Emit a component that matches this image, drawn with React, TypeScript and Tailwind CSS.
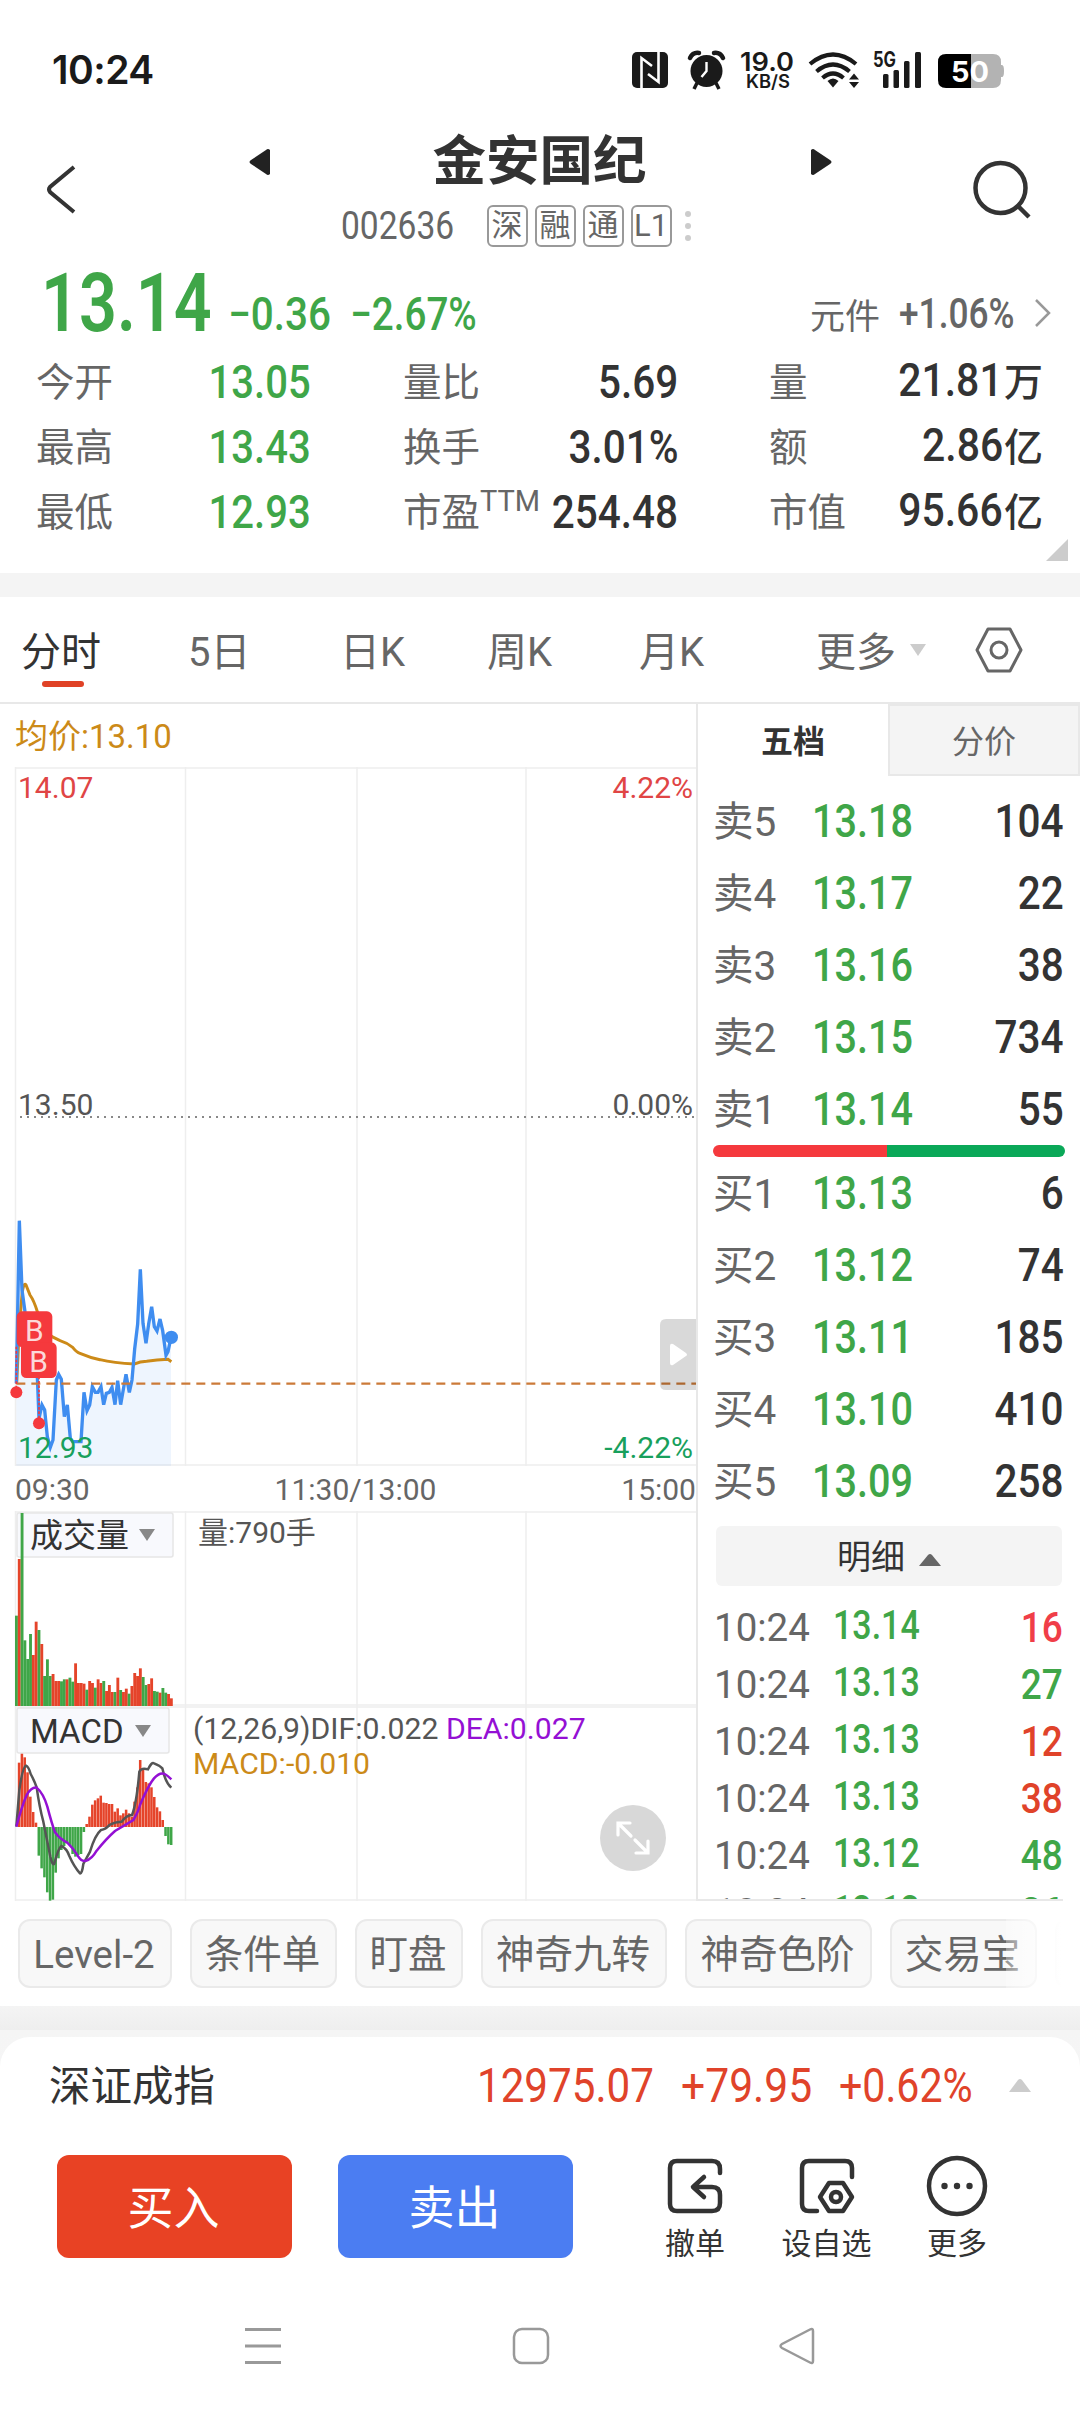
import React from 'react';

const stats = [
  ['今开', '13.05', '量比', '5.69', '量', '21.81', '万'],
  ['最高', '13.43', '换手', '3.01%', '额', '2.86', '亿'],
  ['最低', '12.93', '市盈', '254.48', '市值', '95.66', '亿'],
];

const sells = [
  ['卖5', '13.18', '104'],
  ['卖4', '13.17', '22'],
  ['卖3', '13.16', '38'],
  ['卖2', '13.15', '734'],
  ['卖1', '13.14', '55'],
];

const buys = [
  ['买1', '13.13', '6'],
  ['买2', '13.12', '74'],
  ['买3', '13.11', '185'],
  ['买4', '13.10', '410'],
  ['买5', '13.09', '258'],
];

const trades = [
  { time: '10:24', price: '13.14', qty: '16', color: 'text-[#f03e48]' },
  { time: '10:24', price: '13.13', qty: '27', color: 'text-[#3fa648]' },
  { time: '10:24', price: '13.13', qty: '12', color: 'text-[#e0432a]' },
  { time: '10:24', price: '13.13', qty: '38', color: 'text-[#e0432a]' },
  { time: '10:24', price: '13.12', qty: '48', color: 'text-[#3fa648]' },
  { time: '10:24', price: '13.13', qty: '26', color: 'text-[#3fa648]' },
];

const chips = [
  { label: 'Level-2', width: 'w-[154px]' },
  { label: '条件单', width: 'w-[147px]' },
  { label: '盯盘', width: 'w-[108px]' },
  { label: '神奇九转', width: 'w-[186px]' },
  { label: '神奇色阶', width: 'w-[187px]' },
  { label: '交易宝', width: 'w-[147px]' },
  { label: '', width: 'w-[147px]' },
];

const volumeTops = [
  347, 177, 39, 421, 477, 402, 465, 365, 390, 432, 528, 478, 528, 522, 543, 543, 544, 538, 538,
  533, 545, 490, 549, 549, 551, 569, 543, 549, 563, 538, 549, 543, 573, 555, 576, 576, 533, 570,
  576, 566, 581, 558, 519, 528, 505, 531, 555, 552, 535, 573, 575, 578, 564, 578, 582, 595,
];
const volumeColors = 'GRGGGGRRGRGGGRRRGGRGGRRRRGRRGRRGRRRGRGRRGRRRRGGRRGGRGGRR';

const macdBars = [
  981, 788, 753, 772, 817, 890, 936, 968, 1067, 1105, 1132, 1177, 1202, 1199, 1118, 1075, 1050,
  1038, 1030, 1035, 1062, 1070, 1065, 1062, 996, 972, 950, 914, 901, 895, 887, 908, 909, 912, 912,
  935, 925, 946, 940, 929, 940, 950, 905, 862, 780, 808, 846, 850, 862, 891, 922, 934, 960, 1008,
  1033, 1035,
];

const PRICE_LINE =
  '49,610 58,122 66,330 75,395 88,470 100,560 112,590 117,715 126,675 134,690 142,770 151,802 159,780 169,600 176,583 184,598 193,710 202,675 211,775 218,785 243,785 252,637 261,692 269,675 277,620 286,637 294,637 303,620 311,674 319,640 328,637 336,622 345,674 353,602 362,674 378,583 388,637 396,600 404,507 413,432 421,268 429,430 438,490 446,432 455,380 463,440 471,453 480,417 488,452 498,526 504,515 513,472';

interface NumProps {
  className?: string;
  children: React.ReactNode;
}

// condensed figures, used for every price
const Num: React.FC<NumProps> = ({ className = 'origin-right scale-x-[0.86]', children }) => (
  <span className={`inline-block whitespace-nowrap font-medium ${className}`}>{children}</span>
);

const StatusBar = () => (
  <div className="flex h-[105px] items-start pl-[52px] pt-[50px] text-[#1a1a1a]">
    <span className="w-[580px] font-['Inter'] text-[39px] font-semibold leading-[39px] tracking-[-0.5px]">
      10:24
    </span>
    <svg className="overflow-visible" width="380" height="42" viewBox="632 50 380 42" fill="#1a1a1a">
      <rect x="632" y="52" width="36" height="36" rx="5" />
      <path d="M641.500 88V58L652 66M658.500 52V82L648 74" stroke="#fff" strokeWidth="2.600" fill="none" />
      <circle cx="706.500" cy="71" r="16" />
      <path
        d="M690 58q3-6 9-5M723 58q-3-6-9-5"
        stroke="#1a1a1a"
        strokeWidth="4.500"
        fill="none"
        strokeLinecap="round"
      />
      <path d="M697 83l-3 6M716 83l3 6" stroke="#1a1a1a" strokeWidth="3.500" />
      <path d="M706.500 62v9l-5 6" stroke="#fff" strokeWidth="2.400" fill="none" />
      <text x="740" y="71" fontFamily="Inter" fontSize="26" fontWeight="600" textLength="54" lengthAdjust="spacingAndGlyphs">
        19.0
      </text>
      <text x="746" y="87.500" fontFamily="Inter" fontSize="18" fontWeight="600" textLength="44" lengthAdjust="spacingAndGlyphs">
        KB/S
      </text>
      <g fill="none" stroke="#1a1a1a" strokeWidth="4.200">
        <path d="M810 64q23-19 46 0" />
        <path d="M816.500 71.500q16.500-14 33 0" />
        <path d="M822.500 78q10.500-9 21 0" />
      </g>
      <path d="M827.500 81q5.500-5 11 0l-5.500 6.500z" />
      <path d="M849 79.500h10l-5-6zM849 82h10l-5 6z" />
      <text x="873" y="66.500" fontFamily="Inter" fontSize="21" fontWeight="700" textLength="23" lengthAdjust="spacingAndGlyphs">
        5G
      </text>
      <rect x="883" y="74" width="5.500" height="14" rx="1.500" />
      <rect x="893.500" y="70" width="5.500" height="18" rx="1.500" />
      <rect x="904" y="61" width="5.500" height="27" rx="1.500" />
      <rect x="915" y="52" width="6" height="36" rx="1.500" />
      <path d="M971 54h22q8 0 8 8v3h1q2 0 2 6t-2 6h-1v3q0 8-8 8h-22z" fill="#b3b3b3" />
      <path d="M971 54h-25q-8 0-8 8v18q0 8 8 8h25z" fill="#000" />
      <text x="951" y="82" fontFamily="Inter" fontSize="29" fontWeight="700" fill="#fff" textLength="38" lengthAdjust="spacingAndGlyphs">
        50
      </text>
    </svg>
  </div>
);

const Header = () => (
  <header className="flex h-[150px] items-start pl-[44px]">
    <button className="mt-[58px] mr-[165px]">
      <svg width="40" height="54" viewBox="44 163 40 54" fill="none">
        <path d="M74 167L50 187q-2 2.500 0 5L74 212" stroke="#333" strokeWidth="4" />
      </svg>
    </button>
    <svg className="mt-[43px]" width="22" height="28" viewBox="0 0 22 28">
      <path d="M21 2v24q-2 2-4 0L2 16q-3-2 0-4L17 2q2-2 4 0z" fill="#222" />
    </svg>
    <div className="flex w-[539px] flex-col items-center pt-[24px]">
      <h1 className="mr-[2px] text-[53.500px] font-bold leading-[66px] text-[#333]">金安国纪</h1>
      <div className="flex h-[42px] w-[350px] mt-[10px] ml-[-50px] items-center text-[#666]">
        <span className="w-[146px]">
          <span className="inline-block origin-left scale-x-[0.86] text-[39px]">002636</span>
        </span>
        <div className="flex gap-[7px] text-[31px] leading-[36px]">
          {['深', '融', '通', 'L1'].map((tag) => (
            <span key={tag} className="flex h-[42px] w-[41px] items-center justify-center rounded-md border-2 border-[#999]">
              {tag}
            </span>
          ))}
        </div>
        <div className="ml-[13px] flex flex-col gap-[6px]">
          <i className="h-[6px] w-[6px] rounded-full bg-[#ccc]" />
          <i className="h-[6px] w-[6px] rounded-full bg-[#ccc]" />
          <i className="h-[6px] w-[6px] rounded-full bg-[#ccc]" />
        </div>
      </div>
    </div>
    <svg className="mt-[43px]" width="22" height="28" viewBox="0 0 22 28">
      <path d="M1 2v24q2 2 4 0L20 16q3-2 0-4L5 2q-2-2-4 0z" fill="#222" />
    </svg>
    <svg className="mt-[52px] ml-[138px]" width="66" height="66" viewBox="970 157 66 66" fill="none" stroke="#333" strokeWidth="4.500">
      <circle cx="1000.500" cy="188" r="25" />
      <path d="M1018 206l11 11" />
    </svg>
  </header>
);

const Quote = () => (
  <section className="h-[318px] pl-[36px]">
    <div className="flex h-[93px] items-end pb-[7px] text-[#3fa648]">
      <span className="w-[192px] pl-[5px]">
        <Num className="origin-left scale-x-[0.82] text-[81px] font-semibold leading-[75px]">13.14</Num>
      </span>
      <span className="w-[122px]">
        <Num className="origin-left scale-x-[0.88] text-[46px] leading-[54px]">−0.36</Num>
      </span>
      <span className="w-[424px]">
        <Num className="origin-left scale-x-[0.84] text-[46px] leading-[54px]">−2.67%</Num>
      </span>
      <span className="w-[125px] pl-[36px] text-[35px] leading-[46px] text-[#666]">元件</span>
      <span className="w-[136px] text-[#666]">
        <Num className="origin-left scale-x-[0.84] text-[42px] leading-[54px]">+1.06%</Num>
      </span>
      <svg className="mb-[12px]" width="20" height="32" viewBox="0 0 20 32" fill="none">
        <path d="M1 3l13 13L1 29" stroke="#999" strokeWidth="2.500" />
      </svg>
    </div>
    {stats.map((row, i) => (
      <div key={row[0]} className="flex h-[65px] items-center pt-[3px] text-[38.500px] leading-[65px] text-[#666]">
        <span className="w-[120px]">{row[0]}</span>
        <span className="w-[155px] text-right text-[46.500px] text-[#3fa648]">
          <Num className="origin-right scale-x-[0.86]">{row[1]}</Num>
        </span>
        <span className="w-[155px] whitespace-nowrap pl-[92px]">
          {row[2]}
          {i === 2 && <sup className="top-[-15px] text-[29px]">TTM</sup>}
        </span>
        <span className="w-[212px] text-right text-[46.500px] text-[#333]">
          <Num className="origin-right scale-x-[0.87]">{row[3]}</Num>
        </span>
        <span className="w-[200px] pl-[91px]">{row[4]}</span>
        <span className="w-[165px] whitespace-nowrap text-right text-[46.500px] text-[#333]">
          <Num className="origin-right scale-x-[0.88]">{row[5]}</Num>
          <span className="ml-px text-[39px] font-medium">{row[6]}</span>
        </span>
      </div>
    ))}
    <svg className="ml-[1010px] mt-[-4px]" width="22" height="22">
      <path d="M22 0v22H0z" fill="#ccc" />
    </svg>
  </section>
);

const Tabs = () => (
  <nav className="flex h-[107px] items-start border-b-2 border-[#e8e8e8] pl-[21px] pt-[25px] text-[40px] leading-[62px] text-[#666]">
    <div className="w-[167px] text-[#333]">
      分时
      <div className="-mt-[3px] ml-[21px] h-[6px] w-[42px] rounded-full bg-[#e04226]" />
    </div>
    <span className="w-[152px]">5日</span>
    <span className="w-[147px]">日K</span>
    <span className="w-[152px]">周K</span>
    <span className="w-[177px]">月K</span>
    <span className="w-[94px]">更多</span>
    <svg className="mt-[22px]" width="16" height="12">
      <path d="M0 0h16l-8 12z" fill="#ccc" />
    </svg>
    <svg className="ml-[49px] mt-[4px]" width="48" height="48" viewBox="0 0 48 48" fill="none" stroke="#666" strokeWidth="3">
      <path d="M13 3h22l11 21-11 21H13L2 24z" strokeLinejoin="round" />
      <circle cx="24" cy="24" r="8" />
    </svg>
  </nav>
);

const Grid: React.FC<{ height: number }> = ({ height }) => (
  <g stroke="#eeeeee" strokeWidth="1.500">
    <path d={`M15 1H697M15 ${height - 1}H697`} />
    <path d={`M15.500 0V${height}M185.500 0V${height}M357 0V${height}M526 0V${height}`} />
  </g>
);

const PriceChart = () => (
  <svg className="block" width="696" height="699" viewBox="0 0 696 699" fontFamily="Roboto" fontSize="30">
    <Grid height={699} />
    <path d="M20 350H694" stroke="#888" strokeWidth="2" strokeDasharray="2 5" />
    <g transform="translate(0 413) scale(0.33333)">
      <polygon points={`${PRICE_LINE} 513,857 49,857`} fill="#3f8df0" fillOpacity="0.090" />
      <path
        d="M50 610L58 440L66 345Q70 305 78 315L90 345Q102 362 112 395Q130 450 156 470L180 482Q200 488 218 502Q230 517 240 520Q270 533 300 539Q340 549 404 552Q420 545 440 544Q470 540 504 538L514 545"
        fill="none"
        stroke="#cc8a18"
        strokeWidth="9"
      />
      <polyline points={PRICE_LINE} fill="none" stroke="#3f8df0" strokeWidth="10" />
      <path d="M49 611H2090" stroke="#cb7a38" strokeWidth="7" strokeDasharray="27 18" />
      <path d="M49 500V637M117 590V730" stroke="#f5393d" strokeWidth="5" strokeDasharray="8 5" />
      <circle cx="49" cy="637" r="18" fill="#f5393d" />
      <circle cx="117" cy="730" r="18" fill="#f5393d" />
      <rect x="50" y="394" width="107" height="107" rx="16" fill="#f5393d" />
      <rect x="63" y="487" width="107" height="107" rx="16" fill="#f5393d" />
      <g fill="#fbd9da" fontSize="90" textAnchor="middle">
        <text x="103" y="483">B</text>
        <text x="116" y="576">B</text>
      </g>
      <circle cx="514" cy="472" r="20" fill="#3f8df0" />
    </g>
    <text x="18" y="30.500" fill="#e04545">14.07</text>
    <text x="693" y="30.500" fill="#e04545" textAnchor="end">4.22%</text>
    <text x="18" y="347.500" fill="#555">13.50</text>
    <text x="693" y="347.500" fill="#555" textAnchor="end">0.00%</text>
    <text x="18" y="691" fill="#18a05c">12.93</text>
    <text x="693" y="691" fill="#18a05c" textAnchor="end">-4.22%</text>
    <path d="M697 552h-31q-6 0-6 6v59q0 6 6 6h31z" fill="#000" fillOpacity="0.150" />
    <path d="M670 579q0-3 3-2l13 9q2 2 0 3l-13 9q-3 1-3-2z" fill="#fff" />
  </svg>
);

const VolumeChart = () => (
  <div className="relative h-[195px]">
    <svg className="block" width="696" height="195" viewBox="0 0 696 195">
      <Grid height={195} />
      <rect x="17" y="2" width="156" height="44" rx="2" fill="#f8f9fd" stroke="#e6e6e6" strokeWidth="1.500" />
      <g transform="translate(0 -11) scale(0.33333)">
        {volumeTops.map((top, i) => (
          <rect
            key={i}
            x={45 + i * 8.45}
            y={top}
            width={8.6}
            height={618 - top}
            fill={volumeColors[i] === 'G' ? '#3fa648' : '#e5442a'}
          />
        ))}
      </g>
    </svg>
    <div className="absolute left-[30px] top-[4px] flex items-center leading-[42px]">
      <span className="text-[33px] text-[#333]">成交量</span>
      <svg className="ml-[10px] mb-[2px]" width="16" height="12">
        <path d="M0 0h16l-8 12z" fill="#888" />
      </svg>
      <span className="ml-[43px] -mt-[7px] text-[30px] text-[#555]">量:790手</span>
    </div>
  </div>
);

const MacdChart = () => (
  <div className="relative h-[195px]">
    <svg className="block" width="696" height="195" viewBox="0 0 696 195">
      <Grid height={195} />
      <g transform="translate(0 -206) scale(0.33333)">
        {macdBars.map((v, i) => (
          <rect
            key={i}
            x={45 + i * 8.45}
            y={Math.min(v, 981)}
            width={7.6}
            height={Math.abs(v - 981)}
            fill={v > 981 ? '#3fa648' : '#e5442a'}
          />
        ))}
        <path
          d="M49 980L58 870Q68 800 78 797Q86 800 92 822Q102 840 110 862Q118 920 130 965L151 1070Q158 1100 163 1090Q175 1045 184 1038Q200 1045 208 1068Q222 1100 240 1120Q246 1122 250 1092L270 1055Q285 1005 303 990Q318 988 328 975Q345 965 365 965Q380 945 396 945Q410 910 418 815Q424 802 444 808Q455 785 462 790Q480 797 487 805Q496 848 514 863"
          fill="none"
          stroke="#555"
          strokeWidth="7.500"
        />
        <path
          d="M49 980Q65 920 80 885Q95 860 110 863Q130 880 142 920Q155 970 165 997Q180 1018 202 1028Q220 1045 235 1070Q245 1086 258 1082Q275 1078 290 1052Q320 1015 345 993Q375 975 400 960Q415 935 420 915Q445 855 462 835Q480 815 494 822Q505 828 514 838"
          fill="none"
          stroke="#9410d4"
          strokeWidth="7.500"
        />
      </g>
      <rect x="17" y="2" width="152" height="45" rx="2" fill="#f8f9fd" stroke="#e6e6e6" strokeWidth="1.500" />
    </svg>
    <div className="absolute left-[30px] top-[5px] flex items-center leading-[42px]">
      <span className="w-[105px] text-[33px] text-[#333]">MACD</span>
      <svg className="mb-[3px]" width="16" height="12">
        <path d="M0 0h16l-8 12z" fill="#888" />
      </svg>
    </div>
    <div className="absolute left-[193px] top-[5px] text-[30.200px] leading-[35px] text-[#555]">
      <div>
        (12,26,9)DIF:0.022 <span className="text-[#9410d4]">DEA:0.027</span>
      </div>
      <div className="text-[#cc8a18]">MACD:-0.010</div>
    </div>
    <button className="absolute left-[600px] top-[99px] flex h-[66px] w-[66px] items-center justify-center rounded-full bg-[#d8d8d8]">
      <svg width="36" height="36" viewBox="0 0 36 36" fill="none" stroke="#fff" strokeWidth="3.200" strokeLinecap="round">
        <path d="M3 15V3h12M4 4l12 12M21 33h12V21M20 20l12 12" />
      </svg>
    </button>
  </div>
);

const LevelRow: React.FC<{ row: string[] }> = ({ row }) => (
  <div className="flex h-[72px] items-center leading-[72px]">
    <span className="w-[99px] text-[40.500px] text-[#666]">{row[0]}</span>
    <span className="w-[120px] text-[45.500px] text-[#3fa648]">
      <Num className="origin-left scale-x-[0.87]">{row[1]}</Num>
    </span>
    <span className="w-[132px] text-right text-[45.500px] text-[#333]">
      <Num className="origin-right scale-x-[0.89]">{row[2]}</Num>
    </span>
  </div>
);

const OrderBook = () => (
  <aside className="w-[384px] border-l-2 border-[#e8e8e8]">
    <div className="flex h-[72px] text-[32px]">
      <div className="flex w-[190px] items-center justify-center pt-[4px] font-bold text-[#333]">五档</div>
      <div className="flex w-[192px] items-center justify-center border-2 border-[#e8e8e8] bg-[#f4f4f4] pt-[3px] text-[#666]">
        分价
      </div>
    </div>
    <div className="pl-[15px] pt-[10px]">
      {sells.map((row) => (
        <LevelRow key={row[0]} row={row} />
      ))}
    </div>
    <div className="ml-[15px] -mt-px flex h-[12px] w-[352px] overflow-hidden rounded-full">
      <div className="w-[174px] bg-[#f5393d]" />
      <div className="flex-1 bg-[#0aa858]" />
    </div>
    <div className="pl-[15px] pt-px">
      {buys.map((row) => (
        <LevelRow key={row[0]} row={row} />
      ))}
    </div>
    <button className="mt-[8px] ml-[18px] flex h-[60px] w-[346px] items-center justify-center rounded-md bg-[#f4f4f4] pt-[2px] text-[34px] text-[#333]">
      明细
      <svg className="ml-[14px] mt-[6px]" width="22" height="12">
        <path d="M0 12L9 1q2-2 4 0l9 11z" fill="#666" />
      </svg>
    </button>
    <div className="mt-[13px] h-[302px] w-[365px] overflow-hidden border-b-2 border-[#e8e8e8] pl-[16px]">
      {trades.map((t, i) => (
        <div key={i} className="flex h-[57px] items-center leading-[57px]">
          <span className="w-[119px] text-[38.500px] text-[#666]">{t.time}</span>
          <span className="-mt-[4px] w-[120px] text-[40px] text-[#3fa648]">
            <Num className="origin-left scale-x-[0.85]">{t.price}</Num>
          </span>
          <span className={`w-[111px] text-right text-[43px] ${t.color}`}>
            <Num className="origin-right scale-x-[0.86]">{t.qty}</Num>
          </span>
        </div>
      ))}
    </div>
  </aside>
);

const Chips = () => (
  <div className="relative flex h-[105px] w-[1062px] gap-[18px] overflow-hidden pl-[18px] pt-[18px]">
    {chips.map((chip) => (
      <span
        key={chip.label}
        className={`flex h-[69px] shrink-0 items-center justify-center rounded-xl border-2 border-[#eaeaea] bg-[#f8f8f8] pt-[3px] pr-[2px] text-[38.500px] text-[#666] ${chip.width}`}
      >
        {chip.label}
      </span>
    ))}
    <div className="absolute right-0 top-0 h-full w-[56px] bg-gradient-to-r from-white/30 to-white" />
  </div>
);

const IndexBar = () => (
  <div className="flex h-[94px] items-center pl-[49px] pt-[3px] text-[#e0432a]">
    <span className="w-[428px] pt-[3px] text-[41.500px] text-[#333]">深证成指</span>
    <span className="w-[204px] text-[49px]">
      <span className="inline-block origin-left scale-x-[0.86]">12975.07</span>
    </span>
    <span className="w-[158px] text-[49px]">
      <span className="inline-block origin-left scale-x-[0.87]">+79.95</span>
    </span>
    <span className="w-[170px] text-[49px]">
      <span className="inline-block origin-left scale-x-[0.84]">+0.62%</span>
    </span>
    <svg width="22" height="13">
      <path d="M0 13L9 1q2-2 4 0l9 12z" fill="#ccc" />
    </svg>
  </div>
);

const Actions = () => (
  <div className="flex h-[160px] items-start pl-[57px] pt-[24px]">
    <button className="h-[103px] w-[235px] rounded-xl bg-[#e84224] pt-[3px] pr-[2px] text-[46px] text-white">买入</button>
    <button className="ml-[46px] h-[103px] w-[235px] rounded-xl bg-[#4b7df2] pt-[3px] pr-[2px] text-[46px] text-white">
      卖出
    </button>
    <div className="ml-[58px] flex text-[30px] leading-[42px] text-[#333]">
      <div className="flex w-[128px] flex-col items-center">
        <svg width="62" height="68" viewBox="0 0 62 68" fill="none" stroke="#333" strokeWidth="4.500" strokeLinecap="round">
          <path d="M56 18V14q0-8-8-8H13q-7 0-7 7v36q0 7 7 7h35q8 0 8-8V40q0-8-8-8H30M40 22L29 32l11 10" strokeLinejoin="round" />
        </svg>
        撤单
      </div>
      <div className="flex w-[135px] flex-col items-center">
        <svg width="62" height="68" viewBox="0 0 62 68" fill="none" stroke="#333" strokeWidth="4.500" strokeLinecap="round">
          <path d="M56 22V13q0-7-7-7H13q-7 0-7 7v36q0 7 7 7h8" />
          <path d="M33 28h14l9 14-9 14H33l-9-14z" strokeLinejoin="round" />
          <circle cx="40" cy="42" r="5" />
        </svg>
        设自选
      </div>
      <div className="flex w-[126px] flex-col items-center">
        <svg width="62" height="68" viewBox="0 0 62 68" fill="none">
          <circle cx="31" cy="31" r="28" stroke="#333" strokeWidth="4.500" />
          <circle cx="18.500" cy="31" r="3.200" fill="#333" />
          <circle cx="31" cy="31" r="3.200" fill="#333" />
          <circle cx="43.500" cy="31" r="3.200" fill="#333" />
        </svg>
        更多
      </div>
    </div>
  </div>
);

const SystemNav = () => (
  <div className="flex h-[121px] pl-[244px] pt-[36px]">
    <svg width="38" height="38" viewBox="0 0 38 38" stroke="#999" strokeWidth="3">
      <path d="M1 2.500h36M1 19h36M1 35.500h36" />
    </svg>
    <svg className="ml-[230px]" width="38" height="38" viewBox="0 0 38 38" fill="none" stroke="#999" strokeWidth="2.500">
      <rect x="2" y="2" width="34" height="34" rx="8" />
    </svg>
    <svg className="ml-[228px]" width="38" height="38" viewBox="0 0 38 38" fill="none" stroke="#999" strokeWidth="2.500">
      <path d="M35 4v30q0 3-3 1.500L4 21q-3-2 0-4L32 2.500Q35 1 35 4z" />
    </svg>
  </div>
);

const App: React.FC = () => {
  return (
    <div className="h-[2412px] w-[1080px] overflow-hidden bg-white font-['Roboto','Noto_Sans_CJK_SC',sans-serif]">
      <StatusBar />
      <Header />
      <Quote />
      <div className="h-[24px] bg-[#f4f4f4]" />
      <Tabs />
      <div className="flex h-[1197px]">
        <main className="w-[696px]">
          <div className="h-[63px] pl-[15px] text-[33px] leading-[66px] text-[#cc8a18]">均价:13.10</div>
          <PriceChart />
          <div className="flex h-[45px] justify-between pl-[15px] text-[30px] leading-[48px] text-[#666]">
            <span>09:30</span>
            <span>11:30/13:00</span>
            <span>15:00</span>
          </div>
          <VolumeChart />
          <MacdChart />
        </main>
        <OrderBook />
      </div>
      <Chips />
      <div className="h-[24px] bg-gradient-to-b from-[#f4f4f4] to-[#eeeeee]" />
      <div className="bg-gradient-to-b from-[#f5f5f5] to-[#fbfbfb] pt-[7px]">
        <div className="rounded-t-[30px] bg-white">
          <IndexBar />
          <Actions />
          <SystemNav />
        </div>
      </div>
    </div>
  );
};

export default App;
